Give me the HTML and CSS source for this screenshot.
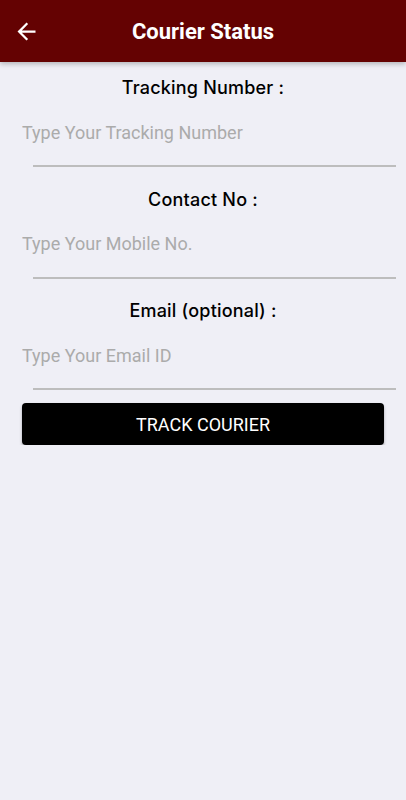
FILE: index.html
```html
<!DOCTYPE html>
<html lang="en">
<head>
    <meta charset="UTF-8">
    <meta name="viewport" content="width=device-width, initial-scale=1.0">
    <title>Courier Status</title>
    <link rel="stylesheet" href="styles.css">
</head>
<body>
    <header class="app-bar">
        <button class="back-btn" aria-label="Back">
            <svg width="27" height="27" viewBox="0 0 24 24">
                <path d="M20 11H7.83l5.59-5.59L12 4l-8 8 8 8 1.41-1.41L7.83 13H20v-2z" fill="#ffffff"/>
            </svg>
        </button>
        <h1>Courier Status</h1>
    </header>

    <form class="track-form">
        <div class="field">
            <label for="tracking">Tracking Number :</label>
            <input type="text" id="tracking" placeholder="Type Your Tracking Number">
            <div class="underline"></div>
        </div>
        <div class="field">
            <label for="mobile">Contact No :</label>
            <input type="text" id="mobile" placeholder="Type Your Mobile No.">
            <div class="underline"></div>
        </div>
        <div class="field">
            <label for="email">Email (optional) :</label>
            <input type="text" id="email" placeholder="Type Your Email ID">
            <div class="underline"></div>
        </div>
        <button type="submit" class="track-btn">TRACK COURIER</button>
    </form>
</body>
</html>
```

FILE: styles.css
```css
/* Basic reset */
* {
    box-sizing: border-box;
    margin: 0;
    padding: 0;
}

body {
    background-color: #efeff6;
    font-family: Roboto, Arial, sans-serif;
    color: #000;
}

/* App bar */
.app-bar {
    position: relative;
    height: 62px;
    display: flex;
    align-items: center;
    justify-content: center;
    background-color: #640202;
    box-shadow: 0 2px 5px rgba(0, 0, 0, 0.25);
}

.app-bar h1 {
    font-size: 22px;
    font-weight: 700;
    color: #ffffff;
}

.back-btn {
    position: absolute;
    left: 13px;
    top: 18px;
    display: flex;
    background: none;
    border: none;
}

/* Form */
.track-form {
    padding: 14px 22px 0 22px;
}

.field {
    display: flex;
    flex-direction: column;
    margin-bottom: 20.5px;
}

.field label {
    height: 24px;
    line-height: 24px;
    text-align: center;
    font-family: Inter, "Noto Sans", sans-serif;
    font-size: 18px;
    font-weight: 500;
    letter-spacing: 0.2px;
    color: #000;
}

.field input {
    margin-top: 20px;
    height: 24px;
    font-family: Roboto, Arial, sans-serif;
    font-size: 18px;
    background: transparent;
    border: none;
    outline: none;
}

.field input::placeholder {
    color: #ababab;
}

.underline {
    margin: 21px -12px 0 11px;
    height: 2px;
    background-color: #bdbdbd;
}

.field:last-of-type {
    margin-bottom: 13px;
}

/* Button */
.track-btn {
    width: 100%;
    height: 42px;
    font-family: Roboto, Arial, sans-serif;
    font-size: 18px;
    color: #ffffff;
    background-color: #000;
    border: none;
    border-radius: 4px;
    box-shadow: 0 2px 3px rgba(0, 0, 0, 0.3);
}
```
